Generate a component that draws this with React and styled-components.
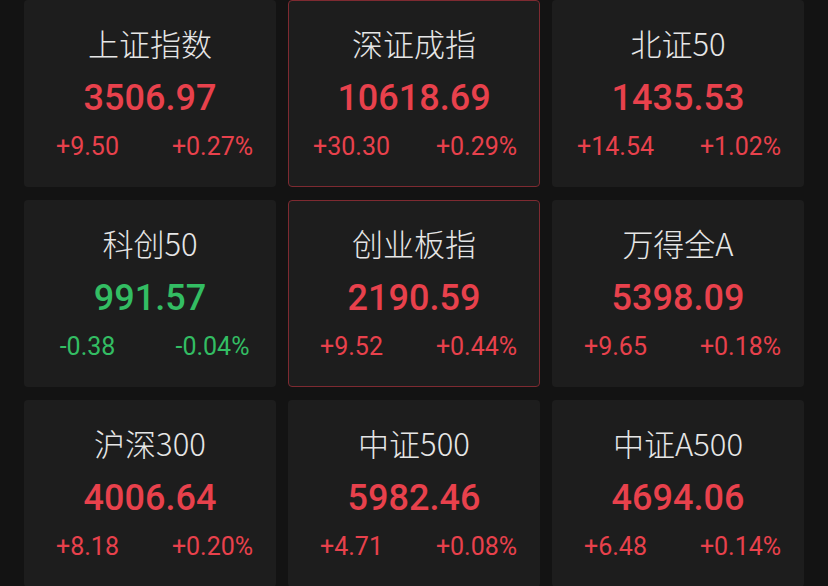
import React from "react";
import styled, { createGlobalStyle } from "styled-components";

const GlobalStyle = createGlobalStyle`
  html, body {
    margin: 0;
    padding: 0;
    background: #131313;
  }
  body {
    font-family: Roboto, "Noto Sans CJK SC", sans-serif;
  }
`;

const Page = styled.div`
  width: 828px;
  height: 586px;
  overflow: hidden;
  box-sizing: border-box;
  padding: 0 24px;
  background: #131313;
`;

const Grid = styled.div`
  display: grid;
  grid-template-columns: repeat(3, 252px);
  grid-auto-rows: 187px;
  column-gap: 12px;
  row-gap: 13px;
`;

const Card = styled.div`
  box-sizing: border-box;
  background: #1d1d1d;
  border-radius: 4px;
  border: 1px solid ${(p) => (p.$active ? "#7e2a31" : "transparent")};
  display: flex;
  flex-direction: column;
  align-items: center;
`;

const Title = styled.div`
  margin-top: 22px;
  height: 40px;
  line-height: 40px;
  font-family: "Noto Sans CJK SC", Roboto, sans-serif;
  font-size: 31px;
  font-weight: 300;
  color: #e6e6e6;
  white-space: nowrap;
`;

const Price = styled.div`
  margin-top: 13px;
  height: 44px;
  line-height: 44px;
  font-family: Roboto, sans-serif;
  font-size: 36px;
  font-weight: 500;
  color: ${(p) => p.$color};
`;

const Changes = styled.div`
  margin-top: 12px;
  width: 100%;
  display: grid;
  grid-template-columns: 1fr 1fr;
  line-height: 30px;
  font-family: Roboto, sans-serif;
  font-size: 25px;
  color: ${(p) => p.$color};
`;

const Change = styled.span`
  text-align: center;
`;

const RED = "#e8414c";
const GREEN = "#33bd63";

const indices = [
  { name: "上证指数", price: "3506.97", diff: "+9.50", pct: "+0.27%" },
  { name: "深证成指", price: "10618.69", diff: "+30.30", pct: "+0.29%", active: true },
  { name: "北证50", price: "1435.53", diff: "+14.54", pct: "+1.02%" },
  { name: "科创50", price: "991.57", diff: "-0.38", pct: "-0.04%" },
  { name: "创业板指", price: "2190.59", diff: "+9.52", pct: "+0.44%", active: true },
  { name: "万得全A", price: "5398.09", diff: "+9.65", pct: "+0.18%" },
  { name: "沪深300", price: "4006.64", diff: "+8.18", pct: "+0.20%" },
  { name: "中证500", price: "5982.46", diff: "+4.71", pct: "+0.08%" },
  { name: "中证A500", price: "4694.06", diff: "+6.48", pct: "+0.14%" },
];

const App = () => {
  return (
    <Page>
      <GlobalStyle />
      <Grid>
        {indices.map((it) => {
          const color = it.diff.startsWith("-") ? GREEN : RED;
          return (
            <Card key={it.name} $active={it.active}>
              <Title>{it.name}</Title>
              <Price $color={color}>{it.price}</Price>
              <Changes $color={color}>
                <Change>{it.diff}</Change>
                <Change>{it.pct}</Change>
              </Changes>
            </Card>
          );
        })}
      </Grid>
    </Page>
  );
};

export default App;
